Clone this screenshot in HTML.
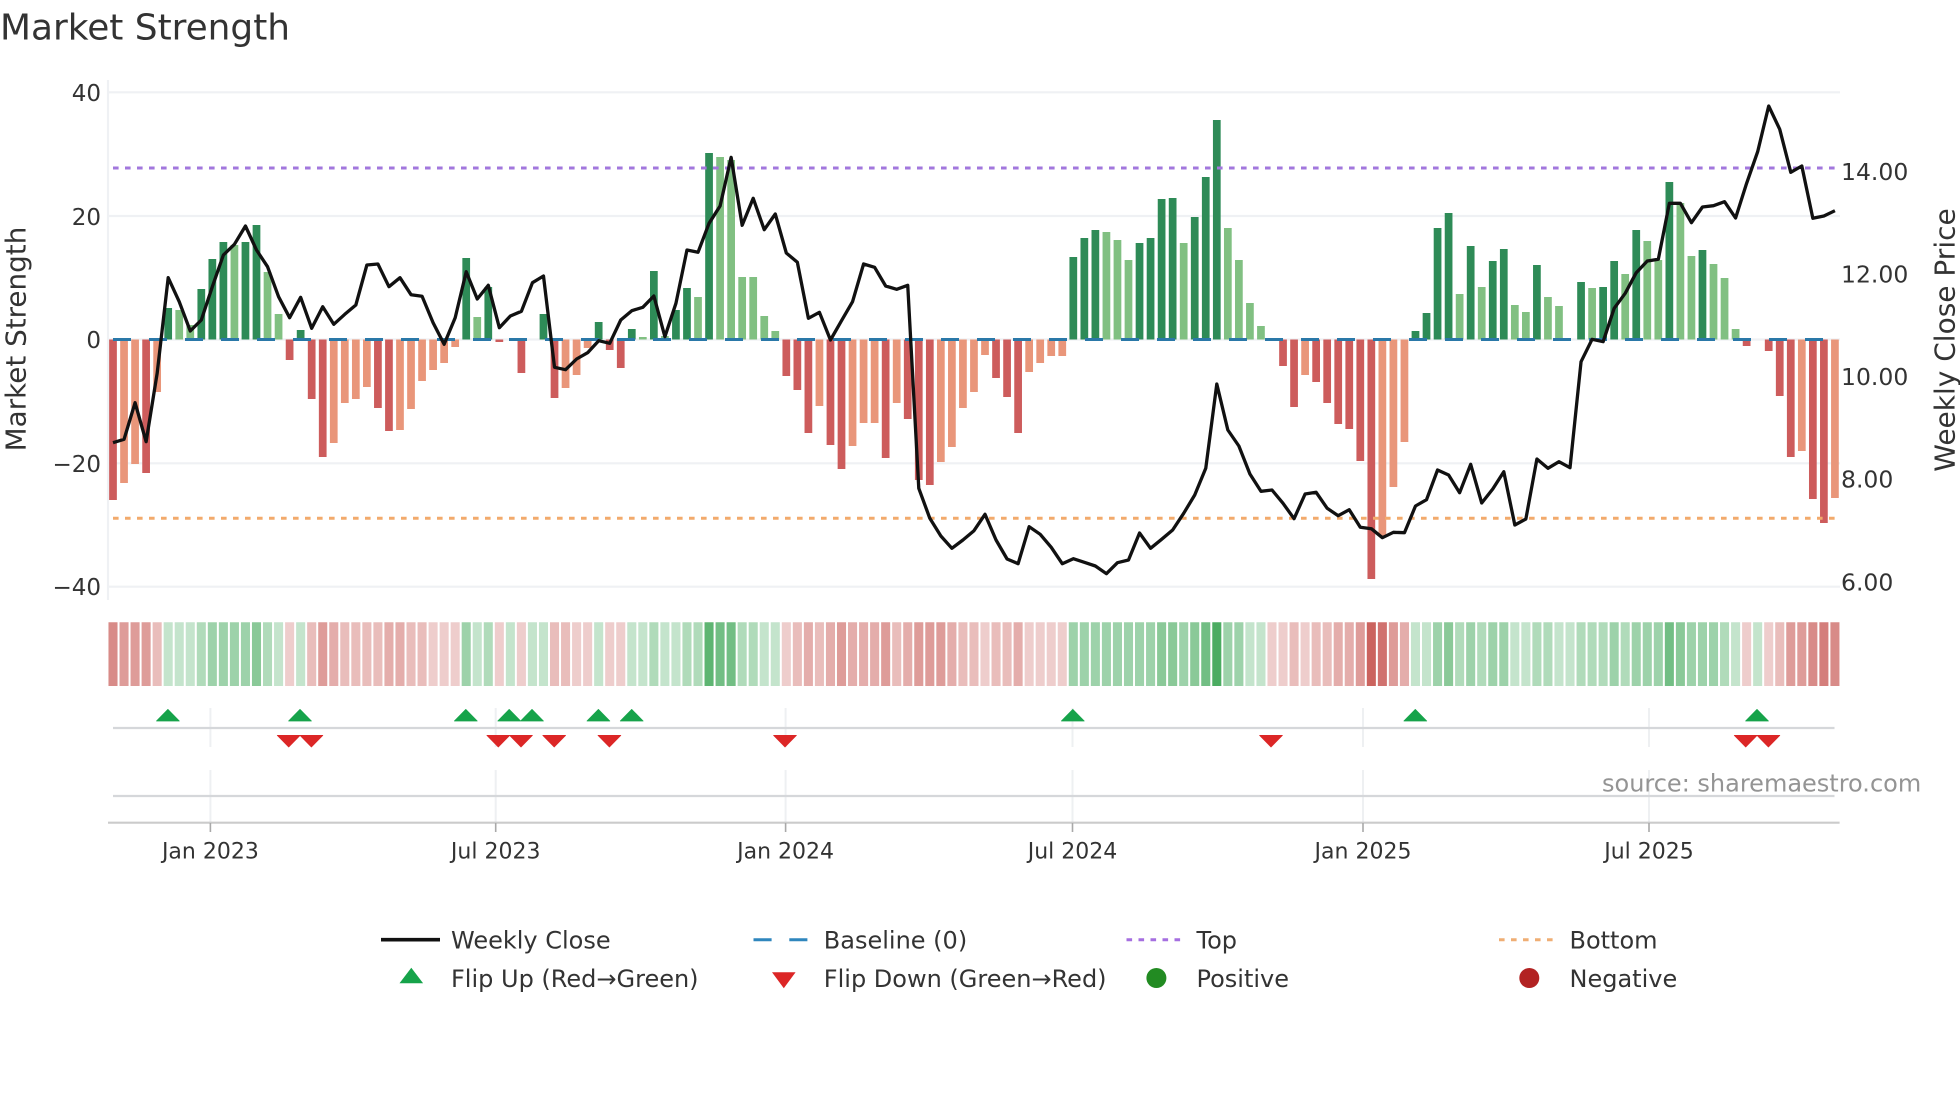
<!DOCTYPE html>
<html lang="en">
<head>
<meta charset="utf-8">
<title>Market Strength</title>
<style>
html,body{margin:0;padding:0;background:#fff;width:1960px;height:1102px;overflow:hidden}
svg{display:block}
text{font-family:"DejaVu Sans","Liberation Sans",sans-serif;fill:#333}
.t{font-size:23px}
.tr{font-size:23.5px}
.x{font-size:22px;text-anchor:middle}
.l{font-size:24px}
</style>
</head>
<body>
<svg width="1960" height="1102" viewBox="0 0 1960 1102" xmlns="http://www.w3.org/2000/svg">
<rect width="1960" height="1102" fill="#fff"/>
<text x="0" y="39.5" font-size="35.9">Market Strength</text>

<!-- grid -->
<path d="M108 80V600M108 92.3H1840M108 216H1840M108 339.5H1840M108 463.3H1840M108 586.7H1840" stroke="#eff1f4" stroke-width="2.2" fill="none"/>

<!-- bars -->
<g transform="translate(113 0) scale(11.038 1)" fill="none" stroke-width=".7">
<path stroke="#cd5c5c" d="M0 339.5V500M3 339.5V473M16 339.5V360M18 339.5V399M19 339.5V457M24 339.5V408M25 339.5V431M35 339.5V342M37 339.5V373M40 339.5V398M45 339.5V350M46 339.5V368M61 339.5V376M62 339.5V390M63 339.5V433M65 339.5V445M66 339.5V469M70 339.5V458M72 339.5V419M73 339.5V480M74 339.5V485M80 339.5V378M81 339.5V397M82 339.5V433M106 339.5V366M107 339.5V407M109 339.5V382M110 339.5V403M111 339.5V424M112 339.5V429M113 339.5V461M114 339.5V579M148 339.5V346M150 339.5V351M151 339.5V396M152 339.5V457M154 339.5V499M155 339.5V523"/>
<path stroke="#e9967a" d="M1 339.5V483M2 339.5V464M4 339.5V392M20 339.5V443M21 339.5V403M22 339.5V399M23 339.5V387M26 339.5V430M27 339.5V409M28 339.5V381M29 339.5V370M30 339.5V363M31 339.5V347M41 339.5V388M42 339.5V375M43 339.5V348M64 339.5V406M67 339.5V446M68 339.5V423M69 339.5V423M71 339.5V403M75 339.5V462M76 339.5V447M77 339.5V408M78 339.5V392M79 339.5V355M83 339.5V372M84 339.5V363M85 339.5V356M86 339.5V356M108 339.5V375M115 339.5V536M116 339.5V487M117 339.5V442M153 339.5V451M156 339.5V498"/>
<path stroke="#2e8b57" d="M5 339.5V308M8 339.5V289M9 339.5V259M10 339.5V242M12 339.5V242M13 339.5V225M17 339.5V330M32 339.5V258M34 339.5V287M39 339.5V314M44 339.5V322M47 339.5V329M49 339.5V271M51 339.5V310M52 339.5V288M54 339.5V153M87 339.5V257M88 339.5V238M89 339.5V230M93 339.5V243M94 339.5V238M95 339.5V199M96 339.5V198M98 339.5V217M99 339.5V177M100 339.5V120M118 339.5V331M119 339.5V313M120 339.5V228M121 339.5V213M123 339.5V246M125 339.5V261M126 339.5V249M129 339.5V265M133 339.5V282M135 339.5V287M136 339.5V261M138 339.5V230M141 339.5V182M144 339.5V250"/>
<path stroke="#81c082" d="M6 339.5V310M7 339.5V325M11 339.5V245M14 339.5V272M15 339.5V314M33 339.5V317M48 339.5V337M50 339.5V336M53 339.5V297M55 339.5V157M56 339.5V160M57 339.5V277M58 339.5V277M59 339.5V316M60 339.5V331M90 339.5V232M91 339.5V240M92 339.5V260M97 339.5V243M101 339.5V228M102 339.5V260M103 339.5V303M104 339.5V326M122 339.5V294M124 339.5V287M127 339.5V305M128 339.5V312M130 339.5V297M131 339.5V306M134 339.5V288M137 339.5V274M139 339.5V241M140 339.5V260M142 339.5V203M143 339.5V256M145 339.5V264M146 339.5V278M147 339.5V329"/>
</g>

<!-- reference lines -->
<path d="M113 339.5H1835" stroke="#2a78a8" stroke-width="3" stroke-dasharray="18 18" fill="none"/>
<path d="M113 168H1835" stroke="#a277dd" stroke-width="3" stroke-dasharray="5.6 6.4" fill="none"/>
<path d="M113 518.3H1835" stroke="#f2aa6c" stroke-width="3" stroke-dasharray="5.6 6.4" fill="none"/>

<!-- weekly close -->
<g transform="translate(113 0) scale(11.038 1)">
<path fill="none" stroke="#111" stroke-width="3.3" stroke-linejoin="round" vector-effect="non-scaling-stroke" d="M0 442.7L1 439.3L2 402.7L3 441.7L4 373.3L5 277.7L6 301.7L7 331L8 320L9 286.7L10 255L11 244.3L12 226L13 250L14 266.7L15 296.7L16 317.7L17 297.3L18 328.3L19 306.7L20 324.3L21 314.3L22 305L23 265L24 264L25 286.7L26 277.7L27 294.7L28 296.3L29 322.7L30 344.3L31 317.7L32 271.7L33 299L34 285.3L35 327.7L36 316L37 311.3L38 282.7L39 276L40 367.3L41 369.7L42 359L43 352.7L44 340.7L45 343.3L46 320L47 310.7L48 307.3L49 296L50 336.7L51 303.3L52 250L53 252.3L54 223.3L55 206L56 157.3L57 225.3L58 198.3L59 229.7L60 214L61 253L62 262.3L63 318.3L64 312.3L65 340L66 320.7L67 301.7L68 264L69 267.3L70 286L71 289.3L72 285.3L73 488.3L74 518.3L75 536L76 548.3L77 540L78 530.7L79 514.3L80 540L81 559L82 563.7L83 526.7L84 534.3L85 547.3L86 563.7L87 558.7L88 562.3L89 566L90 573.7L91 562.7L92 560L93 533L94 548.3L95 539.3L96 530L97 513.3L98 495L99 468.3L100 384L101 430L102 446L103 474L104 491.3L105 490L106 503.3L107 518.7L108 494L109 492.3L110 508.3L111 515.7L112 509.7L113 527.3L114 528.7L115 537.7L116 532.3L117 532.7L118 506L119 499.7L120 470L121 475L122 492.7L123 464.3L124 503L125 489L126 471.7L127 525L128 519L129 459L130 468.3L131 461.7L132 467.7L133 361.7L134 339.3L135 341.7L136 308.3L137 293.3L138 272.7L139 261L140 259.3L141 203.3L142 203.3L143 222.7L144 207L145 205.7L146 201.7L147 218L148 183.3L149 151.7L150 106L151 129.3L152 172.3L153 166L154 218.3L155 216L156 210.7"/>
</g>

<!-- heat strip -->
<g transform="translate(113 0) scale(11.038 1)" fill="none" stroke-width=".82">
<g stroke="#c5504b" opacity=".94">
<path stroke-opacity=".3" d="M16 622.3V686M29 622.3V686M30 622.3V686M31 622.3V686M35 622.3V686M37 622.3V686M42 622.3V686M43 622.3V686M45 622.3V686M46 622.3V686M61 622.3V686M79 622.3V686M83 622.3V686M84 622.3V686M85 622.3V686M86 622.3V686M105 622.3V686M106 622.3V686M108 622.3V686M148 622.3V686M150 622.3V686"/>
<path stroke-opacity=".4" d="M4 622.3V686M18 622.3V686M21 622.3V686M22 622.3V686M23 622.3V686M24 622.3V686M27 622.3V686M28 622.3V686M40 622.3V686M41 622.3V686M62 622.3V686M64 622.3V686M71 622.3V686M77 622.3V686M78 622.3V686M80 622.3V686M81 622.3V686M107 622.3V686M109 622.3V686M110 622.3V686M151 622.3V686"/>
<path stroke-opacity=".5" d="M20 622.3V686M25 622.3V686M26 622.3V686M63 622.3V686M65 622.3V686M67 622.3V686M68 622.3V686M69 622.3V686M72 622.3V686M76 622.3V686M82 622.3V686M111 622.3V686M112 622.3V686M117 622.3V686"/>
<path stroke-opacity=".6" d="M1 622.3V686M2 622.3V686M3 622.3V686M19 622.3V686M66 622.3V686M70 622.3V686M73 622.3V686M74 622.3V686M75 622.3V686M113 622.3V686M116 622.3V686M152 622.3V686M153 622.3V686"/>
<path stroke-opacity=".7" d="M0 622.3V686M154 622.3V686M156 622.3V686"/>
<path stroke-opacity=".78" d="M155 622.3V686"/>
<path stroke-opacity=".85" d="M115 622.3V686"/>
<path stroke-opacity=".95" d="M114 622.3V686"/>
</g>
<g stroke="#269b41" opacity=".9">
<path stroke-opacity=".3" d="M5 622.3V686M6 622.3V686M7 622.3V686M15 622.3V686M17 622.3V686M33 622.3V686M36 622.3V686M38 622.3V686M39 622.3V686M44 622.3V686M47 622.3V686M48 622.3V686M50 622.3V686M51 622.3V686M59 622.3V686M60 622.3V686M103 622.3V686M104 622.3V686M118 622.3V686M119 622.3V686M127 622.3V686M128 622.3V686M131 622.3V686M132 622.3V686M147 622.3V686M149 622.3V686"/>
<path stroke-opacity=".4" d="M8 622.3V686M14 622.3V686M34 622.3V686M49 622.3V686M52 622.3V686M53 622.3V686M57 622.3V686M58 622.3V686M122 622.3V686M124 622.3V686M129 622.3V686M130 622.3V686M133 622.3V686M134 622.3V686M135 622.3V686M137 622.3V686M146 622.3V686"/>
<path stroke-opacity=".5" d="M9 622.3V686M10 622.3V686M11 622.3V686M12 622.3V686M32 622.3V686M87 622.3V686M88 622.3V686M89 622.3V686M90 622.3V686M91 622.3V686M92 622.3V686M93 622.3V686M94 622.3V686M97 622.3V686M101 622.3V686M102 622.3V686M120 622.3V686M123 622.3V686M125 622.3V686M126 622.3V686M136 622.3V686M138 622.3V686M139 622.3V686M140 622.3V686M143 622.3V686M144 622.3V686M145 622.3V686"/>
<path stroke-opacity=".6" d="M13 622.3V686M95 622.3V686M96 622.3V686M98 622.3V686M121 622.3V686M142 622.3V686"/>
<path stroke-opacity=".72" d="M55 622.3V686M56 622.3V686M99 622.3V686M141 622.3V686"/>
<path stroke-opacity=".82" d="M54 622.3V686"/>
<path stroke-opacity=".92" d="M100 622.3V686"/>
</g>
</g>

<!-- lower panels -->
<path d="M210.4 708V747M210.4 770V822M495.7 708V747M495.7 770V822M785.6 708V747M785.6 770V822M1072.5 708V747M1072.5 770V822M1363 708V747M1363 770V822M1649 708V747M1649 770V822" stroke="#eef0f2" stroke-width="2" fill="none"/>
<path d="M113 728H1834.5M113 796H1834.5" stroke="#d5d7da" stroke-width="2.2" fill="none"/>
<path d="M108 822.7H1839.6" stroke="#cbcbcb" stroke-width="2.2" fill="none"/>
<path d="M210.4 823V832M495.7 823V832M785.6 823V832M1072.5 823V832M1363 823V832M1649 823V832" stroke="#a9a9a9" stroke-width="1.6" fill="none"/>

<!-- flip markers -->
<path fill="#16a34a" stroke="#16a34a" stroke-width=".8" stroke-linejoin="round" d="M156.5 721l11.4-11.6 11.4 11.6zM288.6 721l11.4-11.6 11.4 11.6zM454.4 721l11.4-11.6 11.4 11.6zM497.8 721l11.4-11.6 11.4 11.6zM520.6 721l11.4-11.6 11.4 11.6zM587 721l11.4-11.6 11.4 11.6zM620.3 721l11.4-11.6 11.4 11.6zM1061.4 721l11.4-11.6 11.4 11.6zM1403.9 721l11.4-11.6 11.4 11.6zM1745.6 721l11.4-11.6 11.4 11.6z"/>
<path fill="#dc2626" stroke="#dc2626" stroke-width=".8" stroke-linejoin="round" d="M277.3 735.4h22.8l-11.4 11.6zM300 735.4h22.8l-11.4 11.6zM486.9 735.4h22.8l-11.4 11.6zM509.6 735.4h22.8l-11.4 11.6zM542.8 735.4h22.8l-11.4 11.6zM598 735.4h22.8l-11.4 11.6zM773.6 735.4h22.8l-11.4 11.6zM1259.6 735.4h22.8l-11.4 11.6zM1734.3 735.4h22.8l-11.4 11.6zM1757 735.4h22.8l-11.4 11.6z"/>

<!-- left ticks -->
<g class="t" text-anchor="end">
<text x="101" y="101">40</text>
<text x="101" y="225">20</text>
<text x="101" y="348">0</text>
<text x="101" y="472">−20</text>
<text x="101" y="595">−40</text>
</g>
<!-- right ticks -->
<g class="tr">
<text x="1841" y="180">14.00</text>
<text x="1841" y="282.7">12.00</text>
<text x="1841" y="385">10.00</text>
<text x="1841" y="487.7">8.00</text>
<text x="1841" y="590.5">6.00</text>
</g>
<text transform="translate(25.5 339) rotate(-90)" font-size="27.8" text-anchor="middle">Market Strength</text>
<text transform="translate(1954.5 340) rotate(-90)" font-size="28" text-anchor="middle">Weekly Close Price</text>

<!-- x labels -->
<g class="x">
<text x="210.4" y="858.3">Jan 2023</text>
<text x="495.7" y="858.3">Jul 2023</text>
<text x="785.6" y="858.3">Jan 2024</text>
<text x="1072.5" y="858.3">Jul 2024</text>
<text x="1363" y="858.3">Jan 2025</text>
<text x="1649" y="858.3">Jul 2025</text>
</g>

<text x="1602" y="791.7" font-size="24" style="fill:#949494">source: sharemaestro.com</text>

<!-- legend -->
<path d="M381 939.7H440" stroke="#111" stroke-width="3.6" fill="none"/>
<path d="M753.5 939.7H771.6M789.3 939.7H807.4" stroke="#2f86bd" stroke-width="3" fill="none"/>
<path d="M1126.5 939.7H1181" stroke="#a56fe0" stroke-width="3" stroke-dasharray="5.6 6.4" fill="none"/>
<path d="M1499 939.7H1554" stroke="#efae74" stroke-width="3" stroke-dasharray="5.6 6.4" fill="none"/>
<path d="M399.5 983.3l11.8-15.6 11.8 15.6z" fill="#16a34a"/>
<path d="M772 972.3h23.6l-11.8 16z" fill="#dc2626"/>
<circle cx="1156.4" cy="978" r="10" fill="#228b22"/>
<circle cx="1529.3" cy="978" r="10" fill="#b22222"/>
<g class="l">
<text x="451" y="948.5">Weekly Close</text>
<text x="451" y="987">Flip Up (Red→Green)</text>
<text x="823.8" y="948.5">Baseline (0)</text>
<text x="823.8" y="987">Flip Down (Green→Red)</text>
<text x="1196.5" y="948.5">Top</text>
<text x="1196.5" y="987">Positive</text>
<text x="1569.5" y="948.5">Bottom</text>
<text x="1569.5" y="987">Negative</text>
</g>
</svg>
</body>
</html>
